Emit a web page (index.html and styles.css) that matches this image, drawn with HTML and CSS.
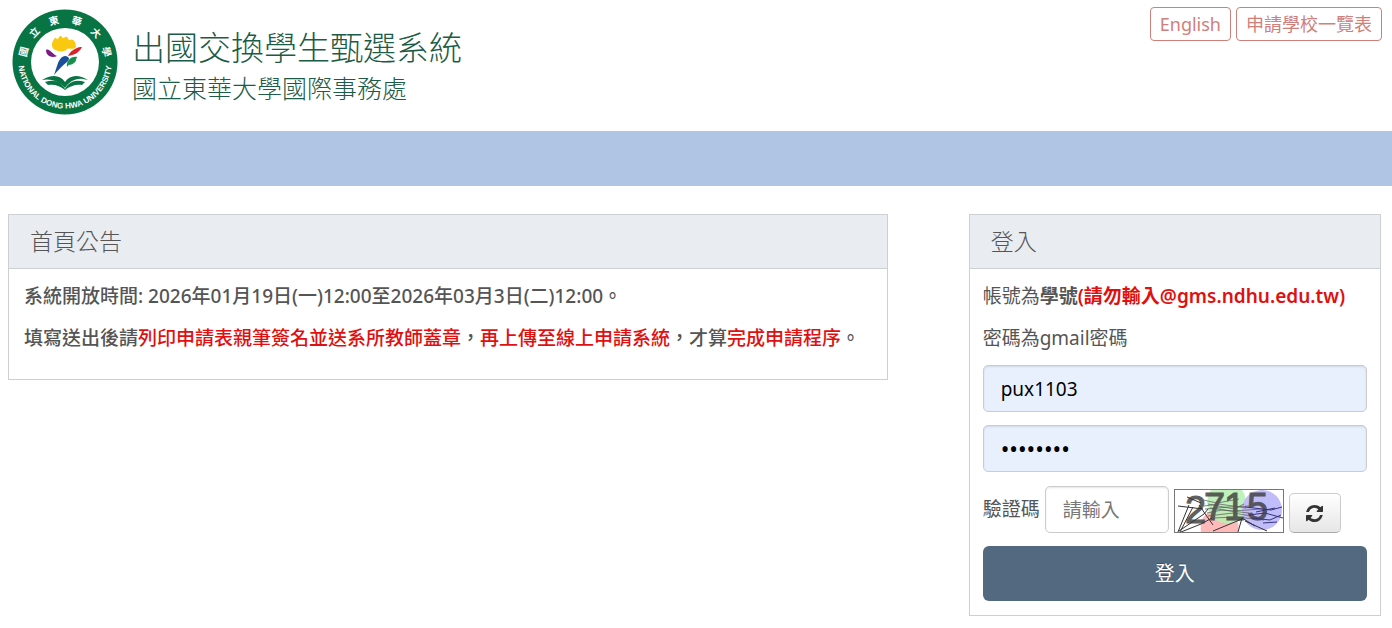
FILE: index.html
```html
<!DOCTYPE html>
<html lang="zh-Hant">
<head>
<meta charset="UTF-8">
<meta name="viewport" content="width=device-width, initial-scale=1.0">
<title>出國交換學生甄選系統</title>
<link rel="stylesheet" href="styles.css">
</head>
<body>
<header class="header">
<svg class="logo" viewBox="0 0 106 106" role="img" aria-label="國立東華大學">
<circle cx="53" cy="53" r="52.5" fill="#087443"/>
<circle cx="53" cy="53" r="34" fill="#fff"/>
<path id="ring" d="M6.500 53A46.500 46.500 0 0 0 99.500 53" fill="none"/>
<text class="logo-en"><textPath href="#ring" startOffset="50%">NATIONAL DONG HWA UNIVERSITY</textPath></text>
<g class="logo-zh">
<text x="53" y="14" transform="rotate(-76 53 53)">國</text>
<text x="53" y="14" transform="rotate(-46 53 53)">立</text>
<text x="53" y="14" transform="rotate(-15 53 53)">東</text>
<text x="53" y="14" transform="rotate(16 53 53)">華</text>
<text x="53" y="14" transform="rotate(47 53 53)">大</text>
<text x="53" y="14" transform="rotate(76 53 53)">學</text>
</g>
<path fill="#f9c911" d="M43 41C38 38 40 32 43 29C44 28 45 31 46 30C47 27 49 26 50 28C51 31 53 27 55 28C57 29 56 32 58 31C61 29 64 33 64 38C61 42 57 38 55 40C52 44 47 42 43 41Z"/>
<path fill="#7b1b86" d="M34 41C37 39 40 45 45 47C41 49 34 48 34 41Z"/>
<path fill="#d8232f" d="M70 38C65 37 57 43 56 47C62 46 67 44 70 38Z"/>
<path fill="#1b4f9c" d="M56 48C51 45 48 50 46 54L42 66C46 61 50 57 55 53C58 50 57 49 56 48Z"/>
<path fill="#16914b" d="M65 48C59 47 54 52 55 58C58 54 59 57 62 54C64 53 64 50 65 48Z"/>
<path fill="#087443" d="M30 71C40 65 48 66 53 73C58 66 66 65 76 71L71 70C63 69 57 73 53 79C48 73 40 69 30 71Z"/>
<path fill="#087443" d="M33 73C43 70 49 73 53 80C57 73 63 70 73 73L70 76C64 75 58 77 53 81C48 77 43 75 36 76Z"/>
</svg>
<div class="brand">
<h1>出國交換學生甄選系統</h1>
<h2>國立東華大學國際事務處</h2>
</div>
<nav class="links">
<a class="link-btn" href="#">English</a>
<a class="link-btn" href="#">申請學校一覽表</a>
</nav>
</header>
<div class="navbar"></div>
<main class="content">
<section class="panel">
<h3 class="panel-title">首頁公告</h3>
<div class="panel-body news">
<p>系統開放時間: 2026年01月19日(一)12:00至2026年03月3日(二)12:00。</p>
<p>填寫送出後請<span class="red">列印申請表親筆簽名並送系所教師蓋章</span>，<span class="red">再上傳至線上申請系統</span>，才算<span class="red">完成申請程序</span>。</p>
</div>
</section>
<section class="panel">
<h3 class="panel-title">登入</h3>
<form class="panel-body login">
<div class="notes">
<p>帳號為<b>學號<span class="red">(請勿輸入@gms.ndhu.edu.tw)</span></b></p>
<p>密碼為gmail密碼</p>
</div>
<input class="field filled" type="text" name="account" aria-label="帳號" value="pux1103">
<input class="field filled password" type="password" name="password" aria-label="密碼" value="password">
<div class="captcha-row">
<label for="captcha">驗證碼</label>
<input class="field captcha-input" type="text" id="captcha" placeholder="請輸入">
<svg class="captcha" viewBox="0 0 110 44" role="img" aria-label="驗證碼圖片">
<rect x="0" y="0" width="110" height="44" fill="#fff"/>
<path fill="#ffb9b9" d="M27 43C25 30 32 21 45 21S67 32 64 43Z"/>
<path fill="#b9eeb4" fill-opacity=".9" d="M37 1H68C74 9 73 24 66 31C58 37 44 35 37 27C32 19 32 8 37 1Z"/>
<circle cx="88" cy="21" r="20" fill="#c1bcfa"/>
<g class="captcha-digits">
<text x="11" y="34">2</text>
<text x="30" y="31">7</text>
<text x="50" y="31">1</text>
<text x="73" y="31">5</text>
</g>
<g fill="none" stroke="#333" stroke-width="1">
<path d="M4 43L15 16M6 43L19 18M5 42L30 25L34 20M7 43L27 35L38 29M4 17L29 20M13 8L27 14M25 16L39 36M39 42L68 30M64 43L68 29L81 37M71 32L93 42"/>
<path stroke="#555" stroke-opacity=".7" d="M29 11L43 14L65 10M30 17L45 15L72 19M31 20L55 18L78 17M33 24L48 21L75 24M34 27L59 24L83 28M36 19L58 22L88 20M34 15L60 20L70 15M38 29L62 28L90 31"/>
<path stroke="#34347a" d="M71 18L97 21L108 18M75 26L91 24L109 29M78 29L96 31L107 26M82 23L101 19M89 34L103 33"/>
</g>
<rect x="0.5" y="0.5" width="109" height="43" fill="none" stroke="#777"/>
</svg>
<button class="refresh" type="button" aria-label="重新整理驗證碼">
<svg viewBox="0 0 1536 1536" aria-hidden="true"><path d="M1511 928q0 5-1 7-64 268-268 434.5t-478 166.500q-146 0-282.500-55t-243.500-157l-129 129q-19 19-45 19t-45-19-19-45v-448q0-26 19-45t45-19h448q26 0 45 19t19 45-19 45l-137 137q71 66 161 102t187 36q134 0 250-65t186-179q11-17 53-117 8-23 30-23h192q13 0 22.500 9.500t9.500 22.500zm25-800v448q0 26-19 45t-45 19h-448q-26 0-45-19t-19-45 19-45l138-138q-148-137-349-137-134 0-250 65t-186 179q-11 17-53 117-8 23-30 23h-199q-13 0-22.500-9.500t-9.500-22.500v-7q65-268 270-434.500t480-166.500q146 0 284 55.500t245 156.500l130-129q19-19 45-19t45 19 19 45z"/></svg>
</button>
</div>
<button class="submit" type="submit">登入</button>
</form>
</section>
</main>
</body>
</html>
```
FILE: styles.css
```css
* {
  box-sizing: border-box;
}

body {
  margin: 0;
  background: #fff;
  color: #555;
  font-family: "Noto Sans", "Noto Sans CJK TC", sans-serif;
  font-size: 19px;
  line-height: 28px;
}

h1, h2, h3, p {
  margin: 0;
  font-weight: 300;
}

p {
  font-weight: 400;
}

/* header */
.header {
  display: flex;
  align-items: flex-start;
  padding: 7px 10px 14px 12px;
}

.logo {
  width: 106px;
  height: 106px;
  margin: 2px 14px 2px 0;
}

.logo-en {
  font-family: "Liberation Sans", sans-serif;
  font-size: 8px;
  font-weight: bold;
  text-anchor: middle;
  fill: #fff;
}

.logo-zh {
  font-size: 10px;
  font-weight: bold;
  text-anchor: middle;
  fill: #fff;
}

.brand {
  padding-top: 20px;
  color: #1c5c46;
}

.brand h1 {
  font-size: 33px;
  line-height: 41px;
}

.brand h2 {
  font-size: 25px;
  line-height: 41px;
}

.links {
  display: flex;
  gap: 5px;
  margin-left: auto;
}

.link-btn {
  padding: 2px 9px;
  border: 1px solid #d0807a;
  border-radius: 4px;
  color: #d0807a;
  font-size: 18px;
  text-decoration: none;
}

.navbar {
  height: 55px;
  background: #b0c4e4;
}

/* panels */
.content {
  display: grid;
  grid-template-columns: 64fr 30fr;
  gap: 81px;
  align-items: start;
  padding: 28px 11px 12px 8px;
}

.panel {
  border: 1px solid #ccd0d5;
}

.panel-title {
  padding: 0 21px;
  border-bottom: 1px solid #ccd0d5;
  background: #e9ecf1;
  font-size: 23px;
  line-height: 53px;
}

.panel-body {
  padding: 13px;
}

.news {
  padding-left: 15px;
}

.news p {
  margin-bottom: 14px;
  font-weight: 500;
}

.red {
  color: #e01010;
}

.login {
  display: flex;
  flex-direction: column;
  gap: 13px;
  padding-bottom: 14px;
}

.notes p + p {
  margin-top: 14px;
}

.login b {
  font-weight: 600;
}

.field {
  width: 100%;
  height: 47px;
  padding: 0 17px;
  border: 1px solid #ccc;
  border-radius: 5px;
  box-shadow: inset 0 1px 2px rgba(0, 0, 0, 0.1);
  background: #fff;
  font: inherit;
  line-height: 45px;
}

.filled {
  background: #e8f0fe;
  color: #000;
}

.password {
  font-size: 23px;
}

.captcha-row {
  display: flex;
  align-items: flex-end;
  gap: 5px;
  padding-top: 1px;
}

.captcha-row label {
  line-height: 47px;
}

.captcha-input {
  width: 124px;
}

.captcha-input::placeholder {
  color: #777;
}

.captcha {
  width: 110px;
  height: 44px;
  overflow: visible;
}

.captcha-digits {
  font-family: "Liberation Sans", sans-serif;
  font-size: 38px;
  stroke: #444;
  fill: #444;
  opacity: 0.85;
}

.refresh {
  display: flex;
  align-items: center;
  justify-content: center;
  width: 52px;
  height: 40px;
  border: 1px solid #ccc;
  border-bottom-color: #aaa;
  border-radius: 5px;
  background: linear-gradient(#fff, #e6e6e6);
}

.refresh svg {
  width: 17px;
  height: 17px;
  fill: #333;
}

.submit {
  height: 55px;
  border: 0;
  border-radius: 6px;
  background: #526980;
  color: #fff;
  font: inherit;
  font-size: 20px;
  text-shadow: 0 -1px 0 rgba(0, 0, 0, 0.25);
}
```
